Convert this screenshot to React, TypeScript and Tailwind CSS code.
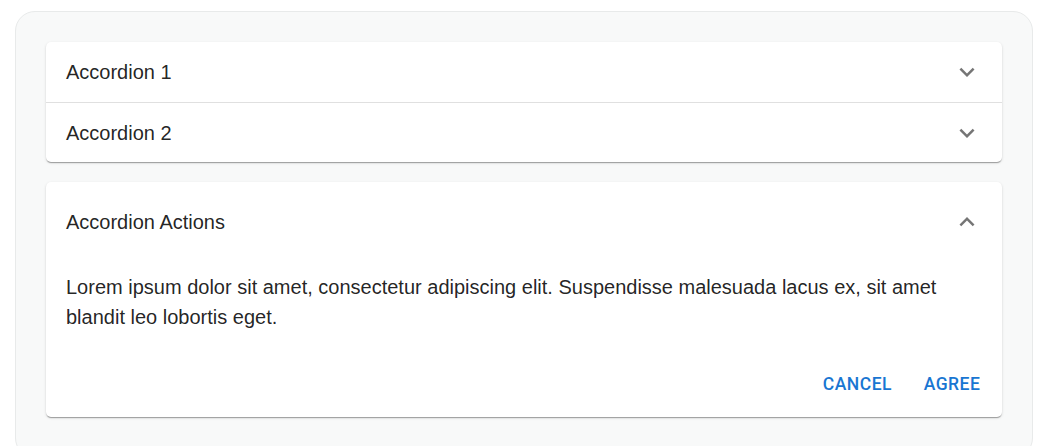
import React from "react";

const Chevron = ({ up }: { up?: boolean }) => (
  <svg
    width="30"
    height="30"
    viewBox="0 0 24 24"
    className={up ? "rotate-180" : ""}
    fill="rgba(0,0,0,0.54)"
  >
    <path d="M16.59 8.59 12 13.17 7.41 8.59 6 10l6 6 6-6z" />
  </svg>
);

const shadow =
  "shadow-[0px_2px_1px_-1px_rgba(0,0,0,0.2),0px_1px_1px_0px_rgba(0,0,0,0.14),0px_1px_3px_0px_rgba(0,0,0,0.12)]";

export default function App() {
  return (
    <div className="bg-white min-h-[446px] pt-[11px] pl-[15px] pr-[10px] font-['Liberation_Sans',Arial,sans-serif] text-[rgba(0,0,0,0.87)]">
      <div className="bg-[#f8f9f9] border border-[#e8eaea] rounded-[20px] px-[30px] pt-[30px] pb-[40px]">
        <div className={`bg-white rounded-[5px] ${shadow}`}>
          <div className="h-[60px] flex items-center justify-between px-[20px]">
            <span className="text-[20px]">Accordion 1</span>
            <Chevron />
          </div>
          <div className="h-px bg-[rgba(0,0,0,0.12)]" />
          <div className="h-[59px] flex items-center justify-between px-[20px]">
            <span className="text-[20px]">Accordion 2</span>
            <Chevron />
          </div>
        </div>
        <div className={`bg-white rounded-[5px] mt-[20px] ${shadow}`}>
          <div className="h-[80px] flex items-center justify-between px-[20px]">
            <span className="text-[20px]">Accordion Actions</span>
            <Chevron up />
          </div>
          <div className="pt-[10px] pb-[20px] px-[20px] text-[20px] leading-[1.5]">
            Lorem ipsum dolor sit amet, consectetur adipiscing elit. Suspendisse
            malesuada lacus ex, sit amet blandit leo lobortis eget.
          </div>
          <div className="flex justify-end items-center p-[10px] gap-[10px] font-['Roboto',sans-serif]">
            <button className="min-w-[80px] h-[45px] px-[10px] text-[17.5px] font-medium uppercase tracking-[0.5px] text-[#1976d2] rounded-[5px]">
              Cancel
            </button>
            <button className="min-w-[80px] h-[45px] px-[10px] text-[17.5px] font-medium uppercase tracking-[0.5px] text-[#1976d2] rounded-[5px]">
              Agree
            </button>
          </div>
        </div>
      </div>
    </div>
  );
}
